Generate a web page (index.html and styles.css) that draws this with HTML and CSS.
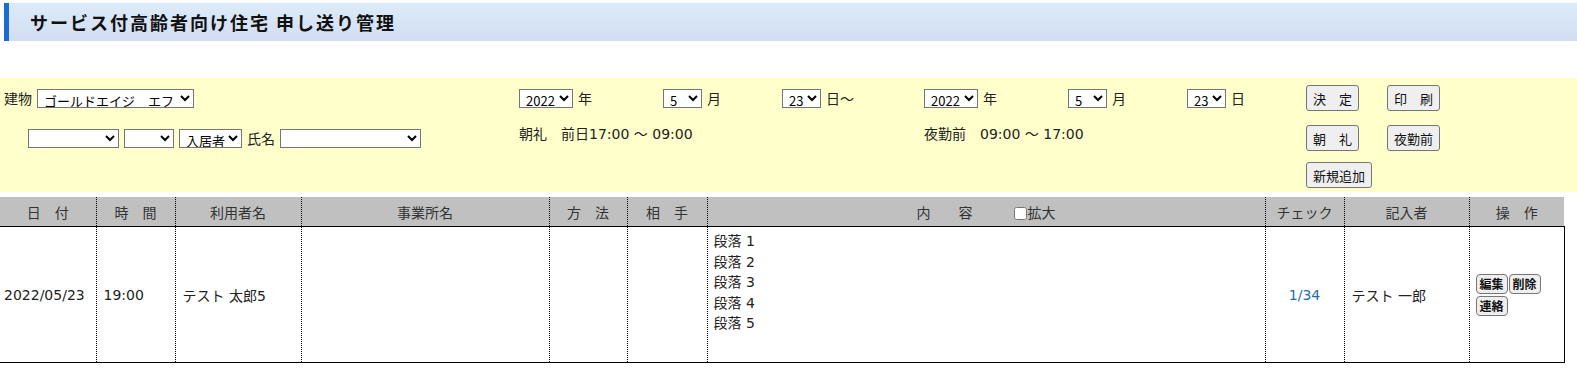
FILE: index.html
```html
<!DOCTYPE html>
<html>
<head>
    <title>申し送り管理</title>
    <link rel="stylesheet" href="styles.css">
</head>
<body>
    <!-- Page title -->
    <div class="page-title">サービス付高齢者向け住宅 申し送り管理</div>

    <!-- Search conditions -->
    <form class="search">
        <div class="cell">
            <span>建物</span>
            <select class="sel-building"><option>ゴールドエイジ　エフ</option></select>
        </div>
        <div class="cell">
            <select class="sel-year"><option>2022</option></select><span>年</span>
        </div>
        <div class="cell">
            <select class="sel-small"><option>5</option></select><span>月</span>
        </div>
        <div class="cell">
            <select class="sel-small"><option>23</option></select><span>日～</span>
        </div>
        <div class="cell">
            <select class="sel-year"><option>2022</option></select><span>年</span>
        </div>
        <div class="cell">
            <select class="sel-small"><option>5</option></select><span>月</span>
        </div>
        <div class="cell">
            <select class="sel-small"><option>23</option></select><span>日</span>
        </div>
        <div class="cell"><button type="button" class="btn">決　定</button></div>
        <div class="cell"><button type="button" class="btn">印　刷</button></div>

        <div class="cell cell-indent">
            <select class="sel-a"><option></option></select>
            <select class="sel-b"><option></option></select>
            <select class="sel-c"><option>入居者</option></select>
            <span>氏名</span>
            <select class="sel-name"><option></option></select>
        </div>
        <div class="cell cell-text span-3">朝礼　前日17:00 ～ 09:00</div>
        <div class="cell cell-text span-3">夜勤前　09:00 ～ 17:00</div>
        <div class="cell"><button type="button" class="btn">朝　礼</button></div>
        <div class="cell"><button type="button" class="btn">夜勤前</button></div>

        <div class="cell col-buttons"><button type="button" class="btn">新規追加</button></div>
    </form>

    <!-- Report list -->
    <table class="report">
        <colgroup>
            <col style="width:96px">
            <col style="width:79px">
            <col style="width:126px">
            <col style="width:248px">
            <col style="width:78px">
            <col style="width:80px">
            <col style="width:558px">
            <col style="width:79px">
            <col style="width:125px">
            <col style="width:95px">
        </colgroup>
        <thead>
            <tr>
                <th>日　付</th>
                <th>時　間</th>
                <th>利用者名</th>
                <th>事業所名</th>
                <th>方　法</th>
                <th>相　手</th>
                <th>内　　容<label class="zoom-check"><input type="checkbox">拡大</label></th>
                <th>チェック</th>
                <th>記入者</th>
                <th>操　作</th>
            </tr>
        </thead>
        <tbody>
            <tr>
                <td class="first">2022/05/23</td>
                <td>19:00</td>
                <td>テスト 太郎5</td>
                <td></td>
                <td></td>
                <td></td>
                <td class="content">
                    <div>段落 1</div>
                    <div>段落 2</div>
                    <div>段落 3</div>
                    <div>段落 4</div>
                    <div>段落 5</div>
                </td>
                <td class="check"><a href="#">1/34</a></td>
                <td>テスト 一郎</td>
                <td class="ops">
                    <div class="ops-buttons">
                        <button type="button" class="btn-small">編集</button>
                        <button type="button" class="btn-small">削除</button>
                        <button type="button" class="btn-small">連絡</button>
                    </div>
                </td>
            </tr>
        </tbody>
    </table>
</body>
</html>
```

FILE: styles.css
```css
body {
    font-family: "DejaVu Sans", "Noto Sans CJK JP", sans-serif;
    font-size: 14px;
    color: #222;
    margin: 0;
}

.page-title {
    margin: 3px 0 0 4px;
    height: 38px;
    line-height: 38px;
    padding-left: 21px;
    border-left: 5px solid #1a6dcf;
    background: linear-gradient(#dcebf9, #d3ddf2);
    font-family: "Noto Sans CJK JP", sans-serif;
    font-size: 18px;
    font-weight: bold;
    letter-spacing: 2px;
    color: #111;
}

/* search area */
.search {
    margin-top: 37px;
    background-color: #ffffcc;
    padding: 7px 0 4px 4px;
    display: grid;
    grid-template-columns: 515px 144px 119px 142px 144px 119px 119px 81px 1fr;
    grid-template-rows: 40px 37px 26px;
    align-items: start;
}

.cell {
    height: 26px;
    display: flex;
    align-items: center;
    gap: 5px;
    white-space: nowrap;
}

.cell-indent {
    padding-left: 24px;
}

.cell-text {
    align-items: flex-start;
    margin-top: -2px;
}

.span-3 {
    grid-column: span 3;
}

.col-buttons {
    grid-column: 8 / span 2;
}

select {
    font-family: "Noto Sans CJK JP", "Liberation Sans", sans-serif;
    font-size: 13px;
    height: 19px;
    padding: 0 0 0 2px;
    border: 1px solid #767676;
    border-radius: 0;
    background-color: #fff;
    color: #000;
}

.sel-building { width: 157px; }
.sel-year { width: 54px; }
.sel-small { width: 39px; }
.sel-a { width: 91px; }
.sel-b { width: 50px; }
.sel-c { width: 63px; }
.sel-name { width: 141px; }

.btn {
    font-family: inherit;
    font-size: 13px;
    height: 26px;
    padding: 0 6px;
    background-color: #efefef;
    border: 1px solid #767676;
    border-radius: 3px;
    color: #111;
}

/* list table */
.report {
    margin-top: 5px;
    width: 1564px;
    table-layout: fixed;
    border-collapse: collapse;
}

.report th {
    height: 29px;
    padding: 0;
    background-color: #c0c0c0;
    color: #333;
    font-weight: normal;
    border-left: 1px dotted #000;
    border-bottom: 1px solid #000;
    white-space: nowrap;
}

.report th:first-child {
    border-left: none;
}

.zoom-check {
    margin-left: 41px;
}

.zoom-check input {
    width: 13px;
    height: 13px;
    margin: 0 1px 0 0;
    vertical-align: -2px;
}

.report tbody tr {
    height: 136px;
}

.report td {
    padding: 0 7px;
    border-left: 1px dotted #000;
    border-bottom: 1px solid #000;
    vertical-align: middle;
    white-space: nowrap;
}

.report td.first {
    border-left: none;
    padding-left: 4px;
}

.report td:last-child {
    border-right: 1px solid #000;
}

.report td.content {
    vertical-align: top;
    padding: 4px 6px 0;
    line-height: 20.5px;
}

.report td.check {
    text-align: center;
    padding: 0;
}

.check a {
    color: #1f6db3;
    text-decoration: none;
}

.report td.ops {
    padding: 0 0 0 6px;
}

.ops-buttons {
    display: flex;
    flex-wrap: wrap;
    gap: 2px 1px;
}

.btn-small {
    font-family: inherit;
    font-size: 12px;
    font-weight: bold;
    height: 20px;
    padding: 0 3px;
    background-color: #efefef;
    border: 1px solid #767676;
    border-radius: 4px;
    color: #111;
}
```
